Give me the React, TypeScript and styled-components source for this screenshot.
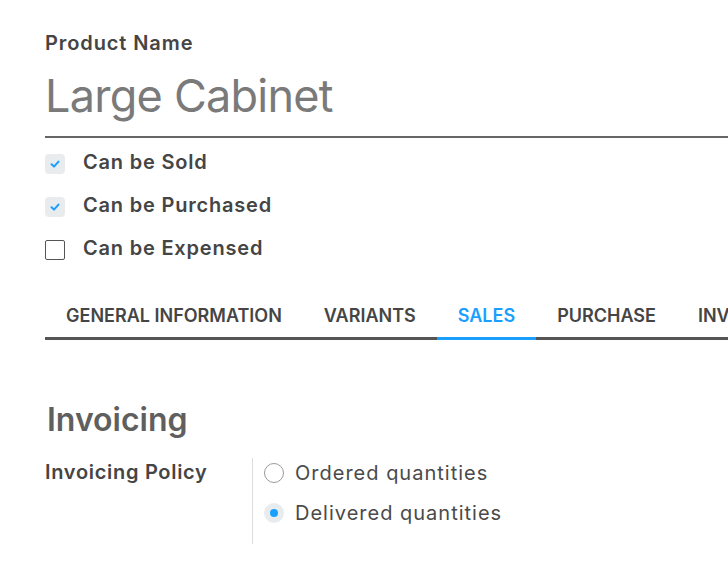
import React from "react";
import styled, { createGlobalStyle } from "styled-components";

const Global = createGlobalStyle`
  html, body { margin: 0; padding: 0; background: #fff; }
  body { font-family: Inter, "Noto Sans", sans-serif; color: #4a4a4a; overflow: hidden; }
`;

const Page = styled.div`
  width: 728px;
  height: 576px;
  padding: 30px 0 0 45px;
  box-sizing: border-box;
  overflow: hidden;
`;

const FieldLabel = styled.div`
  font-size: 20px;
  font-weight: 600;
  line-height: 26px;
  color: #454545;
  letter-spacing: 0.9px;
`;

const TitleInput = styled.div`
  margin-top: 12px;
  font-size: 45px;
  line-height: 56px;
  color: #7a7a7a;
  border-bottom: 2px solid #666;
  padding-bottom: 12px;
  letter-spacing: -0.75px;
`;

const CheckList = styled.div`
  display: flex;
  flex-direction: column;
  gap: 13px;
  margin-top: 9px;
`;

const CheckRow = styled.label`
  display: flex;
  align-items: center;
  gap: 18px;
  height: 30px;
  font-size: 20px;
  font-weight: 600;
  color: #454545;
  letter-spacing: 0.8px;
`;

const Box = styled.span<{ $checked: boolean }>`
  width: 20px;
  height: 20px;
  box-sizing: border-box;
  border-radius: ${(p) => (p.$checked ? "4px" : "2px")};
  background: ${(p) => (p.$checked ? "#e9ecef" : "#fff")};
  border: ${(p) => (p.$checked ? "none" : "1.5px solid #555")};
  display: flex;
  align-items: center;
  justify-content: center;
  margin-top: 4px;
`;

const Tabs = styled.div`
  display: flex;
  margin-top: 42px;
  border-bottom: 3px solid #555;
  white-space: nowrap;
`;

const Tab = styled.div<{ $active?: boolean }>`
  padding: 0 21px 11px;
  font-size: 18px;
  font-weight: 600;
  color: ${(p) => (p.$active ? "#1a9fff" : "#454545")};
  text-transform: uppercase;
  margin-bottom: -3px;
  border-bottom: 3px solid ${(p) => (p.$active ? "#1a9fff" : "transparent")};
  letter-spacing: 0;
`;

const SectionTitle = styled.h2`
  margin: 60px 0 0 2px;
  font-size: 32px;
  font-weight: 600;
  color: #5f5f5f;
  line-height: 40px;
`;

const FieldGrid = styled.div`
  display: grid;
  grid-template-columns: 207px 1fr;
  margin-top: 18px;
`;

const GridLabel = styled.div`
  font-size: 20px;
  font-weight: 600;
  color: #454545;
  padding-top: 2px;
  letter-spacing: 0.7px;
`;

const RadioGroup = styled.div`
  border-left: 1px solid #dcdcdc;
  padding: 0 0 16px 11px;
  display: flex;
  flex-direction: column;
  gap: 10px;
`;

const RadioRow = styled.label`
  display: flex;
  align-items: center;
  gap: 11px;
  font-size: 20px;
  color: #4a4a4a;
  height: 30px;
  letter-spacing: 1px;
`;

const Radio = styled.span<{ $checked: boolean }>`
  width: 20px;
  height: 20px;
  box-sizing: border-box;
  border-radius: 50%;
  border: ${(p) => (p.$checked ? "none" : "1px solid #9a9a9a")};
  background: ${(p) => (p.$checked ? "#e9ecef" : "#fff")};
  display: flex;
  align-items: center;
  justify-content: center;
  &::after {
    content: "";
    display: ${(p) => (p.$checked ? "block" : "none")};
    width: 8px;
    height: 8px;
    border-radius: 50%;
    background: #1a9fff;
  }
`;

const Check = () => (
  <svg width="12" height="12" viewBox="0 0 12 12">
    <path d="M2.5 6.3 L5 8.6 L9.5 3.6" fill="none" stroke="#1a9fff" strokeWidth="2" strokeLinecap="round" strokeLinejoin="round" />
  </svg>
);

export default function App() {
  const checks = [
    { label: "Can be Sold", checked: true },
    { label: "Can be Purchased", checked: true },
    { label: "Can be Expensed", checked: false },
  ];
  const tabs = ["General Information", "Variants", "Sales", "Purchase", "Inventory"];
  return (
    <>
      <Global />
      <Page>
        <FieldLabel>Product Name</FieldLabel>
        <TitleInput>Large Cabinet</TitleInput>
        <CheckList>
          {checks.map((c) => (
            <CheckRow key={c.label}>
              <Box $checked={c.checked}>{c.checked && <Check />}</Box>
              {c.label}
            </CheckRow>
          ))}
        </CheckList>
        <Tabs>
          {tabs.map((t) => (
            <Tab key={t} $active={t === "Sales"}>
              {t}
            </Tab>
          ))}
        </Tabs>
        <SectionTitle>Invoicing</SectionTitle>
        <FieldGrid>
          <GridLabel>Invoicing Policy</GridLabel>
          <RadioGroup>
            <RadioRow>
              <Radio $checked={false} />
              Ordered quantities
            </RadioRow>
            <RadioRow>
              <Radio $checked={true} />
              Delivered quantities
            </RadioRow>
          </RadioGroup>
        </FieldGrid>
      </Page>
    </>
  );
}
